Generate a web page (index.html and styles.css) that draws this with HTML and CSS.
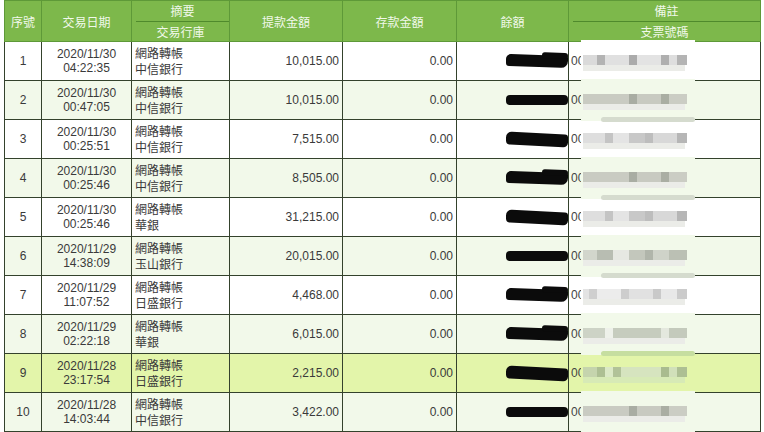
FILE: index.html
```html
<!DOCTYPE html>
<html lang="zh-Hant">
<head>
<meta charset="utf-8">
<title>交易明細</title>
<link rel="stylesheet" href="styles.css">
</head>
<body>
<table class="ledger">
  <colgroup>
    <col class="c-no"><col class="c-date"><col class="c-sum"><col class="c-out"><col class="c-in"><col class="c-bal"><col class="c-memo">
  </colgroup>
  <thead>
    <tr>
      <th>序號</th>
      <th>交易日期</th>
      <th class="split"><div class="top">摘要</div><div class="bot">交易行庫</div></th>
      <th>提款金額</th>
      <th>存款金額</th>
      <th>餘額</th>
      <th class="split"><div class="top">備註</div><div class="bot">支票號碼</div></th>
    </tr>
  </thead>
  <tbody>
    <tr class="odd">
      <td class="no">1</td><td class="date">2020/11/30<br>04:22:35</td><td class="sum">網路轉帳<br>中信銀行</td>
      <td class="amt">10,015.00</td><td class="amt">0.00</td>
      <td class="bal"><span class="blob b1"></span></td>
      <td class="memo">00<span class="mask"><span class="strip s1"></span></span></td>
    </tr>
    <tr class="even">
      <td class="no">2</td><td class="date">2020/11/30<br>00:47:05</td><td class="sum">網路轉帳<br>中信銀行</td>
      <td class="amt">10,015.00</td><td class="amt">0.00</td>
      <td class="bal"><span class="blob b2"></span></td>
      <td class="memo">00<span class="mask bar"><span class="strip s2"></span></span></td>
    </tr>
    <tr class="odd">
      <td class="no">3</td><td class="date">2020/11/30<br>00:25:51</td><td class="sum">網路轉帳<br>中信銀行</td>
      <td class="amt">7,515.00</td><td class="amt">0.00</td>
      <td class="bal"><span class="blob b3"></span></td>
      <td class="memo">00<span class="mask"><span class="strip s3"></span></span></td>
    </tr>
    <tr class="even">
      <td class="no">4</td><td class="date">2020/11/30<br>00:25:46</td><td class="sum">網路轉帳<br>中信銀行</td>
      <td class="amt">8,505.00</td><td class="amt">0.00</td>
      <td class="bal"><span class="blob b1"></span></td>
      <td class="memo">00<span class="mask bar"><span class="strip s2"></span></span></td>
    </tr>
    <tr class="odd">
      <td class="no">5</td><td class="date">2020/11/30<br>00:25:46</td><td class="sum">網路轉帳<br>華銀</td>
      <td class="amt">31,215.00</td><td class="amt">0.00</td>
      <td class="bal"><span class="blob b3"></span></td>
      <td class="memo">00<span class="mask"><span class="strip s3"></span></span></td>
    </tr>
    <tr class="even">
      <td class="no">6</td><td class="date">2020/11/29<br>14:38:09</td><td class="sum">網路轉帳<br>玉山銀行</td>
      <td class="amt">20,015.00</td><td class="amt">0.00</td>
      <td class="bal"><span class="blob b2"></span></td>
      <td class="memo">00<span class="mask bar"><span class="strip s4"></span></span></td>
    </tr>
    <tr class="odd">
      <td class="no">7</td><td class="date">2020/11/29<br>11:07:52</td><td class="sum">網路轉帳<br>日盛銀行</td>
      <td class="amt">4,468.00</td><td class="amt">0.00</td>
      <td class="bal"><span class="blob b1"></span></td>
      <td class="memo">00<span class="mask"><span class="strip s5"></span></span></td>
    </tr>
    <tr class="even">
      <td class="no">8</td><td class="date">2020/11/29<br>02:22:18</td><td class="sum">網路轉帳<br>華銀</td>
      <td class="amt">6,015.00</td><td class="amt">0.00</td>
      <td class="bal"><span class="blob b1"></span></td>
      <td class="memo">00<span class="mask bar green"><span class="strip s6"></span></span></td>
    </tr>
    <tr class="hi">
      <td class="no">9</td><td class="date">2020/11/28<br>23:17:54</td><td class="sum">網路轉帳<br>日盛銀行</td>
      <td class="amt">2,215.00</td><td class="amt">0.00</td>
      <td class="bal"><span class="blob b3"></span></td>
      <td class="memo">00<span class="mask"><span class="strip s7"></span></span></td>
    </tr>
    <tr class="even">
      <td class="no">10</td><td class="date">2020/11/28<br>14:03:44</td><td class="sum">網路轉帳<br>中信銀行</td>
      <td class="amt">3,422.00</td><td class="amt">0.00</td>
      <td class="bal"><span class="blob b2"></span></td>
      <td class="memo">00<span class="mask"><span class="strip s2"></span></span></td>
    </tr>
  </tbody>
</table>
</body>
</html>
```

FILE: styles.css
```css
html, body {
  margin: 0;
  padding: 0;
  background: #ffffff;
}

body {
  font-family: "Liberation Sans", "Noto Sans CJK TC", sans-serif;
  font-size: 12px;
  color: #3a3a3a;
}

.ledger {
  margin-left: 4px;
  width: 757px;
  border-collapse: collapse;
  table-layout: fixed;
}

.c-no { width: 37px; }
.c-date { width: 90px; }
.c-sum { width: 98px; }
.c-out { width: 113px; }
.c-in { width: 114px; }
.c-bal { width: 112px; }
.c-memo { width: 192px; }

.ledger th {
  height: 40px;
  padding: 0;
  background: #7db84b;
  border: 1px solid #5e9938;
  color: #f1f9ea;
  font-family: "Noto Sans CJK TC", "Liberation Sans", sans-serif;
  font-weight: normal;
  font-size: 12px;
  text-align: center;
  vertical-align: middle;
}

.ledger th.split {
  vertical-align: top;
}

.split .top {
  margin-left: 4px;
  height: 20px;
  line-height: 20px;
  border-bottom: 1px solid #4f8a2c;
}

.split .bot {
  line-height: 19px;
}

.ledger td {
  height: 38px;
  padding: 0;
  border: 1px solid #34422c;
  vertical-align: middle;
  white-space: nowrap;
}

tr.odd td { background-color: #ffffff; }
tr.even td { background-color: #f2f9ea; }
tr.hi td { background-color: #e3f5aa; }

.no {
  text-align: center;
}

.date {
  text-align: center;
  line-height: 14px;
}

.sum {
  padding-left: 3px !important;
  line-height: 16px;
  font-family: "Noto Sans CJK TC", "Liberation Sans", sans-serif;
}

.amt {
  text-align: right;
  padding-right: 3px !important;
}

.bal {
  text-align: right;
  padding-right: 0 !important;
  line-height: 0;
}

.blob {
  display: inline-block;
  width: 62px;
  height: 11px;
  background: #0b0b0b;
  vertical-align: middle;
  position: relative;
}

.blob.b1 {
  border-radius: 5px 2px 7px 3px;
  height: 12px;
  transform: skewY(2deg);
}

.blob.b1::before {
  content: "";
  position: absolute;
  right: 0;
  top: -3px;
  width: 26px;
  height: 6px;
  background: #0b0b0b;
  border-radius: 3px;
}

.blob.b2 {
  border-radius: 4px;
  height: 10px;
}

.blob.b3 {
  border-radius: 6px 3px 5px 4px;
  height: 13px;
  transform: skewY(3deg);
}

.memo {
  position: relative;
  padding-left: 2px !important;
  color: #444;
}

.mask {
  position: absolute;
  left: 12px;
  width: 114px;
  top: -2px;
  bottom: -2px;
  background-color: inherit;
  z-index: 1;
}

.mask.bar {
  z-index: 2;
}

.mask.bar::after {
  content: "";
  position: absolute;
  left: 20px;
  right: 0;
  bottom: -1px;
  height: 5px;
  border-radius: 3px;
  background: #d5dbce;
}

.mask.bar.green::after {
  background: #c6dea0;
}

.strip {
  position: absolute;
  left: 2px;
  width: 104px;
  top: 50%;
  height: 10px;
  margin-top: -6px;
}

.strip::after {
  content: "";
  position: absolute;
  left: 0;
  right: 2px;
  top: 10px;
  height: 6px;
  background: #ebece8;
}

.s1 {
  background: linear-gradient(90deg, #dadada 0 14px, #b3b3b3 14px 22px, #e0e0e0 22px 46px, #ababab 46px 54px, #e3e3e3 54px 78px, #afafaf 78px 86px, #dedede 86px 94px, #b4b4b4 94px 104px);
}

.s2 {
  background: linear-gradient(90deg, #c9cbc2 0 46px, #a9ada3 46px 54px, #c8cac1 54px 78px, #aaaea3 78px 86px, #cbcdc4 86px 104px);
}

.s3 {
  background: linear-gradient(90deg, #dedede 0 22px, #c4c4c4 22px 30px, #e4e4e4 30px 46px, #c8c8c8 46px 62px, #bdbdbd 62px 70px, #d8d8d8 70px 94px, #b6b6b6 94px 104px);
}

.s4 {
  background: linear-gradient(90deg, #d2d6cc 0 14px, #b8bdb2 14px 30px, #e6e8e2 30px 46px, #c3c7bc 46px 62px, #b0b5aa 62px 70px, #cfd3c9 70px 86px, #bbc0b4 86px 104px);
}

.s5 {
  background: linear-gradient(90deg, #e3e3e3 0 6px, #cfcfcf 6px 14px, #ececec 14px 38px, #cdcdcd 38px 46px, #e1e1e1 46px 70px, #c9c9c9 70px 78px, #e8e8e8 78px 94px, #cbcbcb 94px 104px);
}

.s6 {
  background: linear-gradient(90deg, #cdd3c6 0 22px, #eef1ea 22px 30px, #c6ccbe 30px 78px, #e4e8de 78px 86px, #c4cabc 86px 104px);
}

.s7 {
  background: linear-gradient(90deg, #c5d4ad 0 14px, #adbf93 14px 22px, #dbe9c6 22px 30px, #b1c298 30px 38px, #d6e4bf 38px 78px, #a9bb8f 78px 86px, #d1e0ba 86px 94px, #adbf93 94px 104px);
}

.s7::after {
  background: #d7eab6;
}
```
